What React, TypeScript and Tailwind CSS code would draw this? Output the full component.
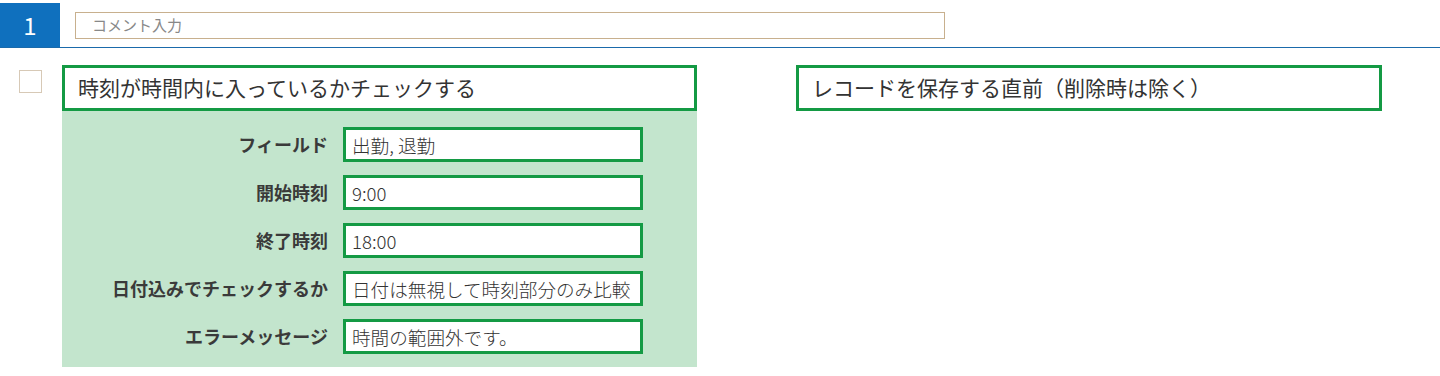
const rows = [
  { label: "フィールド", value: "出勤, 退勤" },
  { label: "開始時刻", value: "9:00" },
  { label: "終了時刻", value: "18:00" },
  { label: "日付込みでチェックするか", value: "日付は無視して時刻部分のみ比較" },
  { label: "エラーメッセージ", value: "時間の範囲外です。" },
];

export default function App() {
  return (
    <div
      className="w-[1440px] h-[376px] bg-white text-[#333]"
      style={{ fontFamily: '"Noto Sans CJK JP", "Noto Sans", sans-serif' }}
    >
      {/* header */}
      <div className="flex items-start pt-[3px] border-b border-[#1a6aab]">
        <div className="w-[60px] h-[44px] bg-[#0f70be] text-white text-[24px] flex items-center justify-center">
          1
        </div>
        <div className="ml-[15px] mt-[9px] w-[870px] h-[27px] border border-[#c8b08e] flex items-center pl-[16px] text-[15px] text-[#888]">
          コメント入力
        </div>
      </div>

      {/* body */}
      <div className="flex items-start mt-[17px]">
        <div className="ml-[19px] mt-[5px] w-[23px] h-[23px] border border-[#d7c9b6] bg-white" />

        <div className="ml-[20px] w-[635px]">
          <div className="h-[46px] border-[3px] border-[#149a44] flex items-center pl-[13px] text-[21px]">
            時刻が時間内に入っているかチェックする
          </div>
          <div className="bg-[#c3e5cd] pt-[16px] pb-[13px] flex flex-col gap-[13px]">
            {rows.map((r) => (
              <div key={r.label} className="flex items-center">
                <div className="w-[266px] text-right font-bold text-[18px] text-[#3a3a3a]">
                  {r.label}
                </div>
                <div className="ml-[15px] w-[300px] h-[35px] border-[3px] border-[#149a44] bg-white flex items-center pl-[6px] text-[18.6px] font-light text-[#333] whitespace-nowrap overflow-hidden">
                  {r.value}
                </div>
              </div>
            ))}
          </div>
        </div>

        <div className="ml-[99px] w-[586px]">
          <div className="h-[46px] border-[3px] border-[#149a44] flex items-center pl-[13px] text-[21px]">
            レコードを保存する直前（削除時は除く）
          </div>
        </div>
      </div>
    </div>
  );
}
